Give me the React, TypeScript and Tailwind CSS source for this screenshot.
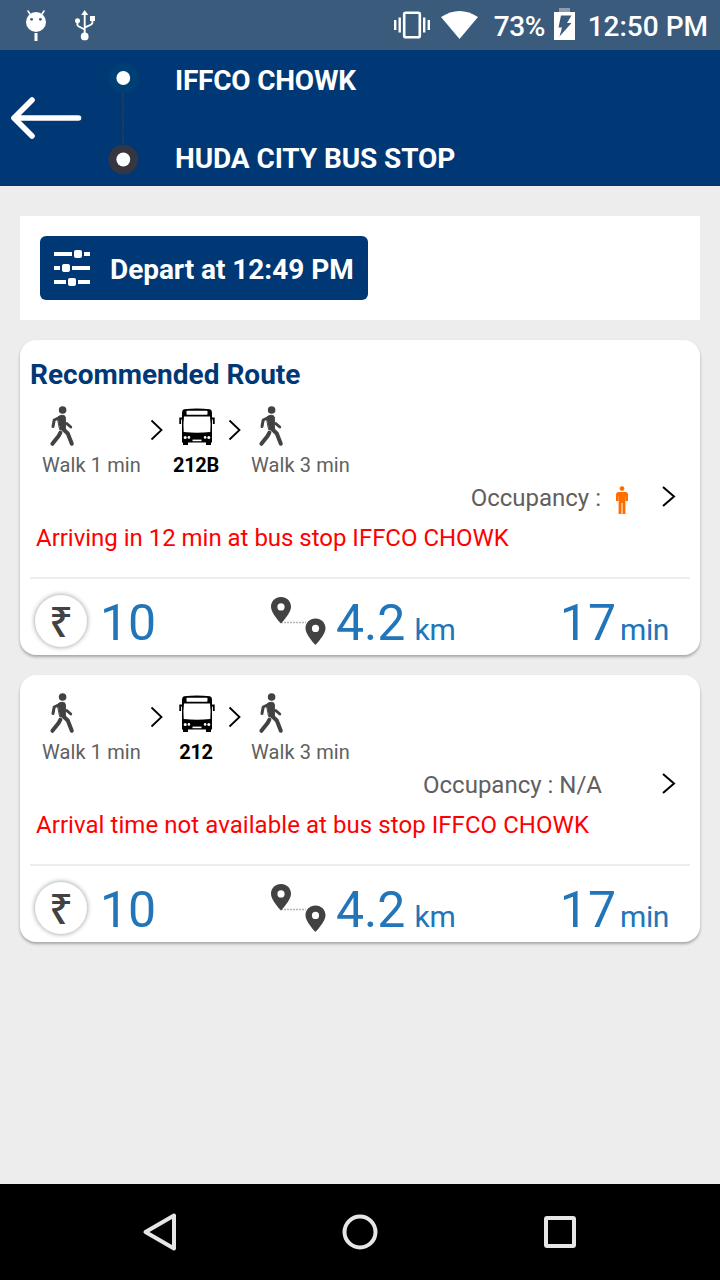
import type { ReactNode } from "react";

type Route = {
  id: number;
  title?: string;
  bus: string;
  occupancy: "low" | null;
  message: string;
  fare: string;
  distance: string;
  duration: string;
};

const routes: Route[] = [
  {
    id: 1,
    title: "Recommended Route",
    bus: "212B",
    occupancy: "low",
    message: "Arriving in 12 min at bus stop IFFCO CHOWK",
    fare: "10",
    distance: "4.2",
    duration: "17",
  },
  {
    id: 2,
    bus: "212",
    occupancy: null,
    message: "Arrival time not available at bus stop IFFCO CHOWK",
    fare: "10",
    distance: "4.2",
    duration: "17",
  },
];

const WalkIcon = () => (
  <svg className="ml-[6px] h-11 w-7" viewBox="0 0 28 44" fill="none" stroke="#424242" strokeLinecap="round" strokeLinejoin="round">
    <circle cx="14.6" cy="6" r="3.8" fill="#424242" stroke="none" />
    <path d="M9.500 13.500C11.500 10.800 17 10.200 17.400 13.500V25L12 25.500Z" fill="#424242" strokeWidth="1" />
    <path d="M12.500 13L6.200 16L5 22.600" strokeWidth="3" />
    <path d="M18.800 19.600L22.800 23" strokeWidth="2.800" />
    <path d="M14.500 24.500L19.800 29.500L23.800 39.800" strokeWidth="4" />
    <path d="M12.400 28.600L10.600 32L4.400 39.800" strokeWidth="4" />
  </svg>
);

const BusIcon = () => (
  <svg className="ml-0.5 h-11 w-9" viewBox="0 0 36 44">
    <path d="M5 5.200Q18 4 31 5.200Q32.800 5.600 33 8.400V38.500H32V41H27V38.500H9V41H4V38.500H3V8.400Q3.200 5.600 5 5.200Z" fill="#000" />
    <rect x="7.500" y="6.800" width="21" height="3.900" rx="0.8" fill="#fff" />
    <path d="M5 12.600H31Q32 20 31.300 28Q18 29.400 4.700 28Q4 20 5 12.600Z" fill="#fff" />
    <path d="M3.500 14.500H1.200V20M32.500 14.500H34.800V20" stroke="#000" strokeWidth="1.800" fill="none" />
    <circle cx="6.200" cy="33.400" r="1.500" fill="#fff" />
    <circle cx="9.900" cy="33.400" r="1.300" fill="#fff" />
    <circle cx="26.100" cy="33.400" r="1.300" fill="#fff" />
    <circle cx="29.800" cy="33.400" r="1.500" fill="#fff" />
    <rect x="13.500" y="35.600" width="9" height="1.600" fill="#fff" />
  </svg>
);

const StepArrow = () => (
  <svg className="h-11 w-8 shrink-0" viewBox="0 0 32 44" fill="none" stroke="#000" strokeWidth="1.8">
    <path d="M10.500 16.500L20.500 26L10.500 35.500" />
  </svg>
);

const PersonIcon = () => (
  <svg className="h-7 w-4" viewBox="0 0 16 28" fill="#ff6f00">
    <circle cx="8" cy="2.600" r="2.400" />
    <path d="M4.500 6H11.500Q14 6.200 14 9V15H11.600V10H11.400V28H8.500V17H7.500V28H4.600V10H4.400V15H2V9Q2 6.200 4.500 6Z" />
  </svg>
);

const PinsIcon = () => (
  <svg className="h-[50px] w-14 shrink-0" viewBox="0 0 56 50">
    <path d="M11 26.500H36" stroke="#b5b5b5" strokeWidth="1.500" strokeDasharray="2 1" />
    <path fillRule="evenodd" fill="#424242" d="M11 1C5.200 1 1 5.400 1 10.800C1 17.500 11 27.500 11 27.500S21 17.500 21 10.800C21 5.400 16.800 1 11 1ZM11 7.300A3.600 3.600 0 1 1 11 14.500A3.600 3.600 0 1 1 11 7.300Z" />
    <path fillRule="evenodd" fill="#424242" d="M45.500 22.500C39.700 22.500 35.500 26.900 35.500 32.300C35.500 39 45.500 49 45.500 49S55.500 39 55.500 32.300C55.500 26.900 51.300 22.500 45.500 22.500ZM45.500 28.800A3.600 3.600 0 1 1 45.500 36A3.600 3.600 0 1 1 45.500 28.800Z" />
  </svg>
);

const Step = ({ icon, label, bold }: { icon: ReactNode; label: string; bold?: boolean }) => (
  <div className={bold ? "flex w-[46px] flex-col items-center" : "flex w-[99px] flex-col"}>
    {icon}
    <span
      className={`mt-[5px] whitespace-nowrap text-[20px] leading-6 ${
        bold ? "font-bold tracking-[-0.3px] text-black" : "tracking-[0.1px] text-[#606060]"
      }`}
    >
      {label}
    </span>
  </div>
);

const StatusBar = () => (
  <div className="flex h-[50px] items-center bg-[#3b5b7d] text-white">
    <svg className="ml-6 h-[50px] w-6" viewBox="24 0 24 50">
      <path d="M30 14L28 11M42 14L44 11" stroke="#fff" strokeWidth="1.600" strokeLinecap="round" />
      <circle cx="36" cy="22" r="10" fill="#fff" />
      <circle cx="31.600" cy="19.300" r="1.400" fill="#3b5b7d" />
      <circle cx="40.400" cy="19.300" r="1.400" fill="#3b5b7d" />
      <rect x="34.500" y="33" width="3" height="8" fill="#fff" />
    </svg>
    <svg className="ml-[26px] h-[50px] w-6" viewBox="74 0 24 50">
      <path d="M84.700 13V36M77.400 21V25Q77.400 26 84.700 29.500M92.400 18V23Q92.400 24.500 84.700 27.500" stroke="#fff" strokeWidth="1.900" fill="none" />
      <path d="M84.700 10L88.200 15H81.200Z" fill="#fff" />
      <circle cx="77.500" cy="20.800" r="2.500" fill="#fff" />
      <rect x="90" y="16" width="5" height="5" fill="#fff" />
      <circle cx="84.700" cy="36.400" r="3.900" fill="#fff" />
    </svg>
    <svg className="ml-auto h-[50px] w-[86px]" viewBox="393 0 86 50">
      <rect x="404.200" y="12.700" width="15.600" height="24.600" rx="1.500" fill="none" stroke="#fff" strokeWidth="2.600" />
      <path d="M395.200 20V30M428.800 20V30" stroke="#fff" strokeWidth="2.400" />
      <path d="M399.700 17.500V32.500M424.200 17.500V32.500" stroke="#fff" strokeWidth="2.400" />
      <path d="M441 17Q459.500 5 478 17L459.500 39Z" fill="#fff" />
    </svg>
    <span className="ml-[15px] w-[52px] whitespace-nowrap pt-[3px] text-[28px] font-medium leading-8 tracking-[-0.4px]">73%</span>
    <svg className="ml-2 h-[50px] w-[22px]" viewBox="554 0 22 50">
      <rect x="559" y="8" width="11" height="4" fill="#8b9cb0" />
      <path d="M554 12H575V40H554Z" fill="#fff" />
      <path d="M561 15.500H571.500L567 23H571.500L559.500 36.500L562 27.500H558.500Z" fill="#3b5b7d" />
    </svg>
    <span className="ml-3 mr-3 whitespace-nowrap pt-[3px] text-[28px] font-medium leading-8">12:50 PM</span>
  </div>
);

const Header = () => (
  <header className="flex h-[136px] bg-[#003876] text-white">
    <svg className="ml-[10px] h-[136px] w-[72px]" viewBox="10 50 72 136" fill="none" stroke="#fff" strokeWidth="5.600" strokeLinecap="round" strokeLinejoin="round">
      <path d="M78.500 118H14M32 100L14 118L32 136" />
    </svg>
    <svg className="ml-6 h-[136px] w-[34px]" viewBox="106 50 34 136">
      <circle cx="123.300" cy="78" r="15" fill="#003f73" />
      <path d="M123 92V146" stroke="#2c3e57" strokeWidth="1.600" strokeDasharray="1.500 0.800" />
      <circle cx="123.300" cy="159.500" r="14.800" fill="#35363f" />
      <circle cx="123.300" cy="78" r="6.900" fill="#fff" />
      <circle cx="123.300" cy="159.500" r="6.900" fill="#fff" />
    </svg>
    <div className="ml-[35px] flex flex-col gap-[46px] pt-[15px] text-[28px] font-bold leading-8">
      <span className="tracking-[-0.22px]">IFFCO CHOWK</span>
      <span className="tracking-[-0.1px]">HUDA CITY BUS STOP</span>
    </div>
  </header>
);

const RouteCard = ({ route }: { route: Route }) => (
  <section className="rounded-[16px] bg-white px-[10px] shadow-[0_2px_3px_rgba(0,0,0,0.3)]">
    {route.title && (
      <h2 className="h-12 pt-[19px] text-[28px] font-bold leading-8 text-[#003876]">{route.title}</h2>
    )}
    <div className="flex pl-3 pt-4">
      <Step icon={<WalkIcon />} label="Walk 1 min" />
      <StepArrow />
      <Step icon={<BusIcon />} label={route.bus} bold />
      <StepArrow />
      <Step icon={<WalkIcon />} label="Walk 3 min" />
    </div>
    <div className="mt-[7px] flex h-7 items-center justify-end text-[24px] leading-7 text-[#606060]">
      <span>Occupancy : {route.occupancy === null && "N/A"}</span>
      {route.occupancy && (
        <span className="ml-[13px] mr-[3px] pt-[3px]">
          <PersonIcon />
        </span>
      )}
      <svg className={`h-7 w-4 ${route.occupancy ? "ml-[28px]" : "ml-[59px]"} mr-[13px]`} viewBox="0 0 16 28" fill="none" stroke="#000" strokeWidth="2">
        <path d="M2 3L13 12.500L2 22" />
      </svg>
    </div>
    <p
      className={`mt-3 pl-[6px] text-[24px] leading-7 text-[#ff0000] ${
        route.occupancy ? "tracking-[-0.02px]" : "tracking-[0.06px]"
      }`}
    >
      {route.message}
    </p>
    <div className="mt-[25px] h-[2px] bg-[#ededed]" />
    <div className="flex h-[76px] items-center pt-2 text-[#2175b8]">
      <div className="ml-[5px] flex h-[52px] w-[52px] items-center justify-center rounded-full bg-white font-['Noto_Sans',sans-serif] text-[42px] font-medium leading-none text-[#424242] shadow-[0_0_4px_1px_rgba(0,0,0,0.3)]">
        ₹
      </div>
      <span className="ml-[13px] w-[170px] pt-1 text-[50px] leading-[50px]">{route.fare}</span>
      <PinsIcon />
      <div className="ml-[10px] flex items-baseline pt-[10px] leading-[50px]">
        <span className="text-[50px]">{route.distance}</span>
        <span className="ml-[9px] text-[30px]">km</span>
      </div>
      <div className="ml-auto mr-[21px] flex items-baseline pt-[10px] leading-[50px]">
        <span className="text-[50px]">{route.duration}</span>
        <span className="ml-1 text-[30px] tracking-[-0.4px]">min</span>
      </div>
    </div>
  </section>
);

const NavBar = () => (
  <nav className="flex h-24 items-center justify-between bg-black px-[140px]">
    <svg className="h-10 w-10" viewBox="0 0 40 40" fill="none" stroke="#e6e6e6" strokeWidth="4" strokeLinejoin="round">
      <path d="M5.500 20L34 3.500V36.500Z" />
    </svg>
    <svg className="h-10 w-10" viewBox="0 0 40 40" fill="none" stroke="#e6e6e6" strokeWidth="4">
      <circle cx="20" cy="20" r="15.500" />
    </svg>
    <svg className="h-10 w-10" viewBox="0 0 40 40" fill="none" stroke="#e6e6e6" strokeWidth="4">
      <rect x="6" y="6" width="28" height="28" rx="1" />
    </svg>
  </nav>
);

const App = () => {
  return (
    <div className="flex h-[1280px] w-[720px] flex-col overflow-hidden bg-[#ededed] font-['Roboto',sans-serif]">
      <StatusBar />
      <Header />
      <main className="flex flex-1 flex-col gap-5 px-5 pt-[30px]">
        <div className="h-[104px] bg-white p-5">
          <button type="button" className="flex h-16 w-[328px] items-center rounded-[6px] bg-[#003876] pl-[14px] text-white">
            <svg className="h-9 w-9" viewBox="0 0 36 36" fill="#fff">
              <path d="M0 2H18V6H0ZM30 2H36V6H30ZM0 16H6V20H0ZM18 16H36V20H18ZM0 30H12V34H0ZM24 30H36V34H24Z" />
              <rect x="20" y="0" width="8" height="8" rx="2" />
              <rect x="8" y="14" width="8" height="8" rx="2" />
              <rect x="14" y="28" width="8" height="8" rx="2" />
            </svg>
            <span className="ml-5 whitespace-nowrap pt-1 text-[28px] font-bold leading-8 tracking-[-0.05px]">Depart at 12:49 PM</span>
          </button>
        </div>
        {routes.map((route) => (
          <RouteCard key={route.id} route={route} />
        ))}
      </main>
      <NavBar />
    </div>
  );
};

export default App;
